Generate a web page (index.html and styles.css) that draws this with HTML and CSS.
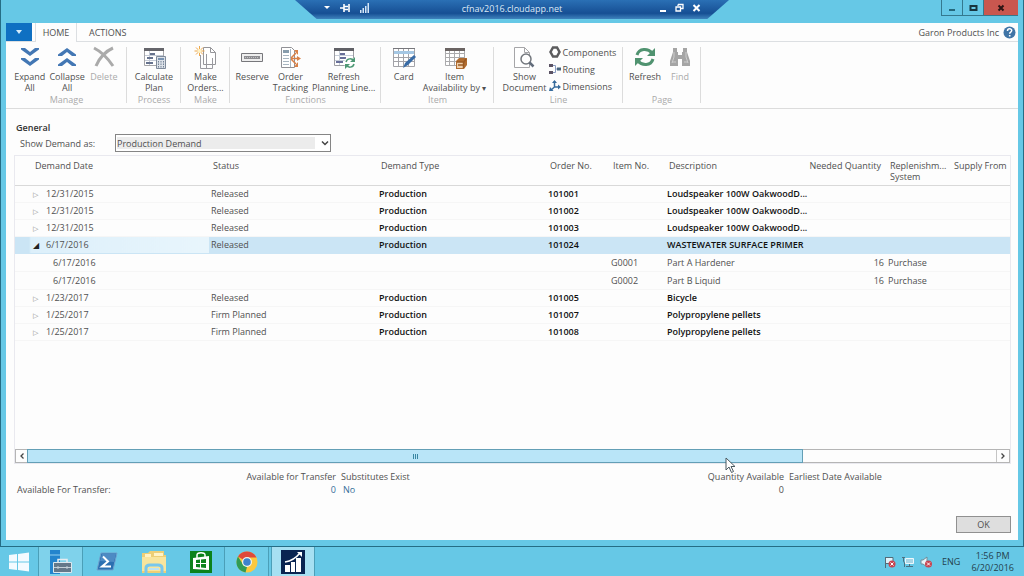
FILE: index.html
```
<!DOCTYPE html>
<html lang="en">
<head>
    <meta charset="UTF-8">
    <meta name="viewport" content="width=device-width, initial-scale=1.0">
    <title>Order Planning</title>
    <link rel="stylesheet" href="styles.css">
</head>
<body>
    <!-- Remote connection bar -->
    <div class="remote-bar">
        <div class="remote-tools">
            <svg width="8" height="10" viewBox="0 0 8 10"><path d="M1 3h6L4 6z" fill="#fff"/></svg>
            <svg width="12" height="10" viewBox="0 0 12 10"><path d="M1 5h4M5 1v8M5 3.5h4M5 6.5h4M10 1v8" stroke="#fff" stroke-width="1.6" fill="none"/></svg>
            <svg width="10" height="10" viewBox="0 0 10 10"><path d="M1 7h1.5v3H1zM3.5 5H5v5H3.5zM6 3h1.5v7H6zM8.5 0H10v10H8.5z" fill="#d5e6f7"/></svg>
        </div>
        <span class="remote-host">cfnav2016.cloudapp.net</span>
        <div class="remote-window">
            <svg width="8" height="10" viewBox="0 0 8 10"><path d="M1 7h6v2H1z" fill="#fff"/></svg>
            <svg width="9" height="10" viewBox="0 0 9 10"><path d="M3 1.5h5v4H6M3 1.5V3" stroke="#fff" stroke-width="1.3" fill="none"/><path d="M1 4h4.5v4H1z" stroke="#fff" stroke-width="1.3" fill="none"/></svg>
            <svg width="9" height="10" viewBox="0 0 9 10"><path d="M1.5 2l6 6M7.5 2l-6 6" stroke="#fff" stroke-width="2"/></svg>
        </div>
    </div>

    <main class="window">
        <header class="titlebar">
            <button class="win-btn" aria-label="Minimize"><svg width="8" height="8" viewBox="0 0 8 8"><path d="M1 5h6v2H1z" fill="#24687c"/></svg></button>
            <button class="win-btn" aria-label="Maximize"><svg width="9" height="8" viewBox="0 0 9 8"><path d="M1.5 2h6v4h-6z" fill="none" stroke="#17343e" stroke-width="2"/></svg></button>
            <button class="win-btn close" aria-label="Close"><svg width="8" height="8" viewBox="0 0 8 8"><path d="M1.5 1.5l5 5M6.5 1.5l-5 5" stroke="#2c1414" stroke-width="2"/></svg></button>
        </header>

        <div class="client">
            <nav class="tabs">
                <button class="app-menu" aria-label="Application menu"><svg width="8" height="6" viewBox="0 0 8 6"><path d="M1 1h6L4 5z" fill="#d6ecfb"/></svg></button>
                <button class="tab active">HOME</button>
                <button class="tab">ACTIONS</button>
                <span class="company">Garon Products Inc</span>
                <svg class="help" width="13" height="13" viewBox="0 0 13 13"><circle cx="6.5" cy="6.5" r="6" fill="#3f74a6"/><path d="M4.5 5c0-3 4.2-2.7 4.2-.4 0 1.6-2 1.4-2 3.2" stroke="#fff" stroke-width="1.5" fill="none"/><path d="M5.900 9h1.600v1.500H5.900z" fill="#fff"/></svg>
            </nav>

            <!-- Ribbon -->
            <div class="ribbon">
                <section class="group manage">
                    <div class="tools">
                        <button class="tool">
                            <svg width="24" height="24" viewBox="0 0 24 24"><path d="M3 2h4l5 4 5-4h4v1.5L12 10 3 3.5zM3 12h4l5 4 5-4h4v1.5L12 20l-9-6.5z" fill="#4377b4"/></svg>
                            Expand<br>All
                        </button>
                        <button class="tool">
                            <svg width="24" height="24" viewBox="0 0 24 24"><path d="M12 2l9 6.500V10h-4l-5-4-5 4H3V8.500zM12 12l9 6.500V20h-4l-5-4-5 4H3v-1.500z" fill="#4377b4"/></svg>
                            Collapse<br>All
                        </button>
                        <button class="tool" disabled>
                            <svg width="24" height="24" viewBox="0 0 24 24"><path d="M2 2c8 4 13 9 19 18M21 2C14 5 7 12 4 20" stroke="#aaa" stroke-width="3" fill="none"/></svg>
                            Delete
                        </button>
                    </div>
                    <h2>Manage</h2>
                </section>
                <section class="group process">
                    <div class="tools">
                        <button class="tool">
                            <svg width="24" height="24" viewBox="0 0 24 24"><path d="M2.500 2.500h19v17h-19z" fill="#fff" stroke="#a5a5a8"/><path d="M2 2h20v3H2z" fill="#65656b"/><path d="M3 9.500h18M3 14.500h18M7.500 5v14" stroke="#c5cbd6"/><path d="M8 7h5v2H8zM5 11h6v2H5zM4 16h7v2H4z" fill="#67738e"/><path d="M14.500 10.500h9v12h-9z" fill="#dce1e8" stroke="#7f8b9b"/><path d="M16 12h6v2h-6z" fill="#7893b2"/><path d="M16.500 15v7M19 15v7M21.500 15v7" stroke="#718194" stroke-dasharray="1.5 1"/></svg>
                            Calculate<br>Plan
                        </button>
                    </div>
                    <h2>Process</h2>
                </section>
                <section class="group make">
                    <div class="tools">
                        <button class="tool">
                            <svg width="24" height="24" viewBox="0 0 24 24"><path d="M9.500 1.500h7l5 5v12h-12z" fill="#fff" stroke="#96969a"/><path d="M16.500 1.500v5h5" fill="none" stroke="#96969a"/><path d="M6.500 9v13.500h12V12M12.500 8v14" fill="none" stroke="#9a9aa0"/><path d="M5.500 0v10M.5 5h10M2 1.500l7 7M9 1.500l-7 7" stroke="#eea74b"/><circle cx="5.500" cy="5" r="2" fill="#fff3c5"/></svg>
                            Make<br>Orders...
                        </button>
                    </div>
                    <h2>Make</h2>
                </section>
                <section class="group functions">
                    <div class="tools">
                        <button class="tool">
                            <svg width="24" height="24" viewBox="0 0 24 24"><path d="M1.500 7.500h21v8h-21z" fill="#eee" stroke="#77777b"/><path d="M4 10h16v3H4z" fill="#8d8d91"/><path d="M5 11.500h14" stroke="#c2c2c4" stroke-dasharray="1 1"/></svg>
                            Reserve
                        </button>
                        <button class="tool">
                            <svg width="24" height="24" viewBox="0 0 24 24"><path d="M3.500 1.500h10l3 3v17h-13z" fill="#fff" stroke="#919196"/><path d="M5 4h6v3H5z" fill="#879cac"/><path d="M5 9.500h6M5 12.500h6M5 15.500h6M5 18.500h6M12.500 3v18" stroke="#a8b6c1"/><path d="M13 12l5-5M13 12.500h7M13 13l5 5" stroke="#d98046" stroke-width="1.5"/><path d="M16 4h4v5zM19 10l4 2.500-4 2.500zM16 21h4v-5z" fill="#d98046"/></svg>
                            Order<br>Tracking
                        </button>
                        <button class="tool">
                            <svg width="24" height="24" viewBox="0 0 24 24"><path d="M2.500 2.500h19v17h-19z" fill="#fff" stroke="#9d9da2"/><path d="M2 2h20v3H2z" fill="#606066"/><path d="M3 9.500h18M3 14.500h18M7.500 5v14" stroke="#c7ced9"/><path d="M8 7h5v2H8zM8 11h6v2H8zM4 15h7v2H4z" fill="#686f99"/><circle cx="18" cy="17" r="6" fill="#fff"/><path d="M14 16c1-4 6-4 8-1M22 18c-1 4-6 4-8 1" stroke="#4e9875" stroke-width="1.5" fill="none"/><path d="M23 11v5h-5zM13 23v-5h5z" fill="#4e9875"/></svg>
                            Refresh<br>Planning Line...
                        </button>
                    </div>
                    <h2>Functions</h2>
                </section>
                <section class="group item">
                    <div class="tools">
                        <button class="tool">
                            <svg width="24" height="24" viewBox="0 0 24 24"><path d="M1.500 2.500h21v18h-21zM1 11.500h21M1 15.500h21M6.500 2v18M11.500 2v18M16.500 2v18" fill="#fff" stroke="#a3a3a8"/><path d="M2 6.500h20" stroke="#a5c7e3" stroke-width="3"/><path d="M1 2.500h22" stroke="#77777c"/><path d="M11 22l2-5 9-8 2 2-8 8z" fill="#386ba5"/></svg>
                            Card
                        </button>
                        <button class="tool">
                            <svg width="24" height="24" viewBox="0 0 24 24"><path d="M2.500 2.500h19v17h-19zM2 7.500h20M2 11.500h19M2 15.500h19M6.500 3v16M11.500 3v16M16.500 3v16" fill="#fff" stroke="#ababad"/><path d="M2 2h20v3H2z" fill="#6b6463"/><path d="M13 15l3-3h8v7l-3 4h-8z" fill="#b06c30"/><path d="M14 16h6v6h-6z" fill="#f0d0ac"/><path d="M14 16h7l2-3M20.500 16v6M15 19h5" stroke="#995922" stroke-width="1.5" fill="none"/></svg>
                            Item<br>Availability by <span class="caret">▾</span>
                        </button>
                    </div>
                    <h2>Item</h2>
                </section>
                <section class="group line">
                    <div class="tools">
                        <button class="tool">
                            <svg width="24" height="24" viewBox="0 0 24 24"><path d="M1.500 1.500h10l5 5v15h-15z" fill="#fff" stroke="#a6a6a9"/><path d="M11.500 1.500v5h5" fill="none" stroke="#a6a6a9"/><circle cx="13" cy="13" r="5" fill="#fff" stroke="#73777d" stroke-width="1.5"/><path d="M16.500 16.500l4 4" stroke="#626c7b" stroke-width="2.5"/></svg>
                            Show<br>Document
                        </button>
                        <div class="links">
                            <button class="link-tool"><svg width="12" height="12" viewBox="0 0 12 12"><path d="M4 1.500h4L10.500 6 8 10.500H4L1.500 6z" fill="#fff" stroke="#5c5c5e" stroke-width="2.5"/></svg>Components</button>
                            <button class="link-tool"><svg width="12" height="12" viewBox="0 0 12 12"><path d="M3 2.500h3.500v7H3M6.500 6H9" fill="none" stroke="#889bc0"/><path d="M0 1h4v3H0zM0 8h4v3H0z" fill="#5b5364"/><path d="M8 4.500h4v3H8z" fill="#47657e"/></svg>Routing</button>
                            <button class="link-tool"><svg width="12" height="12" viewBox="0 0 12 12"><path d="M5.500 1v6H11M5.500 7L2 10" fill="none" stroke="#376b9c" stroke-width="1.5"/><path d="M3 3l2.500-3L8 3zM9 4.500L12 7 9 9.500zM1 7l3.500 4H0z" fill="#376b9c"/></svg>Dimensions</button>
                        </div>
                    </div>
                    <h2>Line</h2>
                </section>
                <section class="group page">
                    <div class="tools">
                        <button class="tool">
                            <svg width="24" height="24" viewBox="0 0 24 24"><path d="M4 9c2-7 11-7 15-2M20 13c-2 7-11 7-15 2" stroke="#509370" stroke-width="3" fill="none"/><path d="M22 2v8h-8zM2 20v-8h8z" fill="#509370"/></svg>
                            Refresh
                        </button>
                        <button class="tool" disabled>
                            <svg width="24" height="24" viewBox="0 0 24 24"><path d="M5 2h4v4h1v3h4V6h1V2h4v4l3 9v5h-8v-7h-4v7H2v-5l3-9z" fill="#a5a5a5"/><path d="M6 6v5l-2 6M18 6v5l2 6M4 16h4M16 16h4" stroke="#ccc" fill="none"/></svg>
                            Find
                        </button>
                    </div>
                    <h2>Page</h2>
                </section>
            </div>

            <section class="general">
                <h1>General</h1>
                <div class="field">
                    <label for="demand">Show Demand as:</label>
                    <div class="select-wrap">
                        <select id="demand"><option>Production Demand</option></select>
                        <svg class="chevron" width="8" height="8" viewBox="0 0 8 8"><path d="M1 2.500l3 3 3-3" fill="none" stroke="#444" stroke-width="1.5"/></svg>
                    </div>
                </div>
            </section>

            <!-- Planning lines -->
            <div class="grid">
                <table class="lines">
                    <colgroup>
                        <col class="c-date"><col class="c-status"><col><col class="c-order"><col class="c-item"><col class="c-desc"><col class="c-qty"><col class="c-system"><col class="c-supply">
                    </colgroup>
                    <thead>
                        <tr><th class="date">Demand Date</th><th>Status</th><th>Demand Type</th><th>Order No.</th><th>Item No.</th><th>Description</th><th class="num">Needed Quantity</th><th>Replenishm...<br>System</th><th>Supply From</th></tr>
                    </thead>
                    <tbody>
                        <tr class="parent"><td class="date">12/31/2015</td><td>Released</td><td>Production</td><td>101001</td><td></td><td>Loudspeaker 100W OakwoodD...</td><td></td><td></td><td></td></tr>
                        <tr class="parent"><td class="date">12/31/2015</td><td>Released</td><td>Production</td><td>101002</td><td></td><td>Loudspeaker 100W OakwoodD...</td><td></td><td></td><td></td></tr>
                        <tr class="parent"><td class="date">12/31/2015</td><td>Released</td><td>Production</td><td>101003</td><td></td><td>Loudspeaker 100W OakwoodD...</td><td></td><td></td><td></td></tr>
                        <tr class="parent selected"><td class="date">6/17/2016</td><td>Released</td><td>Production</td><td>101024</td><td></td><td>WASTEWATER SURFACE PRIMER</td><td></td><td></td><td></td></tr>
                        <tr class="child"><td class="date">6/17/2016</td><td></td><td></td><td></td><td>G0001</td><td>Part A Hardener</td><td class="num">16</td><td>Purchase</td><td></td></tr>
                        <tr class="child"><td class="date">6/17/2016</td><td></td><td></td><td></td><td>G0002</td><td>Part B Liquid</td><td class="num">16</td><td>Purchase</td><td></td></tr>
                        <tr class="parent"><td class="date">1/23/2017</td><td>Released</td><td>Production</td><td>101005</td><td></td><td>Bicycle</td><td></td><td></td><td></td></tr>
                        <tr class="parent"><td class="date">1/25/2017</td><td>Firm Planned</td><td>Production</td><td>101007</td><td></td><td>Polypropylene pellets</td><td></td><td></td><td></td></tr>
                        <tr class="parent"><td class="date">1/25/2017</td><td>Firm Planned</td><td>Production</td><td>101008</td><td></td><td>Polypropylene pellets</td><td></td><td></td><td></td></tr>
                    </tbody>
                </table>
                <div class="scrollbar">
                    <button aria-label="Scroll left"><svg width="6" height="8" viewBox="0 0 6 8"><path d="M4.500 1.500L2 4l2.500 2.500" fill="none" stroke="#444" stroke-width="1.3"/></svg></button>
                    <div class="track"><div class="thumb"><i></i><i></i><i></i></div></div>
                    <button aria-label="Scroll right"><svg width="6" height="8" viewBox="0 0 6 8"><path d="M1.500 1.500L4 4 1.500 6.500" fill="none" stroke="#444" stroke-width="1.3"/></svg></button>
                </div>
            </div>

            <table class="totals">
                <thead>
                    <tr><th class="t-label"></th><th class="t-transfer">Available for Transfer</th><th>Substitutes Exist</th><th class="t-qty">Quantity Available</th><th class="t-date">Earliest Date Available</th></tr>
                </thead>
                <tbody>
                    <tr><td class="t-label">Available For Transfer:</td><td class="t-transfer"><a href="#">0</a></td><td class="t-exist"><a href="#">No</a></td><td class="t-qty">0</td><td></td></tr>
                </tbody>
            </table>

            <footer class="actions"><button class="ok">OK</button></footer>
        </div>
    </main>

    <footer class="taskbar">
        <button class="task start" aria-label="Start"><svg width="22" height="20" viewBox="0 0 22 20"><path d="M1 3l8-1v7.500H1zM10 2l11-1.500v9H10zM1 10.500h8V18l-8-1zM10 10.500h11v9L10 18z" fill="#f4fbff"/></svg></button>
        <button class="task open" aria-label="Server Manager"><svg width="24" height="24" viewBox="0 0 24 24"><path d="M1 0h10v24H1z" fill="#2384cd"/><path d="M1 5h10" stroke="#93d0f0"/><path d="M9 12.500v-3h9v3" fill="none" stroke="#e7edf1" stroke-width="1.5"/><path d="M4.500 12.500h18v10h-18z" fill="#64788a" stroke="#dce8ef"/><path d="M5 17.500h17M9 16v3M18 16v3" stroke="#c4d0d8"/></svg></button>
        <button class="task" aria-label="PowerShell"><svg width="22" height="20" viewBox="0 0 22 20"><path d="M5 1h16l-4 17H1z" fill="#2c70b1" stroke="#6fa3cf"/><path d="M6 2h14l-2 8-14-1z" fill="#4d8bc4"/><path d="M7 4.500l5 5-6 5h9" fill="none" stroke="#fff" stroke-width="2"/></svg></button>
        <button class="task" aria-label="File Explorer"><svg width="26" height="24" viewBox="0 0 26 24"><path d="M1 3h6l2-2h14v4h2v18H1z" fill="#edcf76"/><path d="M4 4h6v3H4zM13 3h9v3h-9z" fill="#fff3c5"/><path d="M1 7h24v14H1z" fill="#f8e59d"/><path d="M5 23v-5c0-2 2-3 4-3h8c2 0 4 1 4 3v5" fill="none" stroke="#79c7ec" stroke-width="3"/><path d="M8 19h10" stroke="#bce3f3" stroke-width="2"/></svg></button>
        <button class="task" aria-label="Store"><svg width="24" height="24" viewBox="0 0 24 24"><path d="M1 1h22v22H1z" fill="#0b821c"/><path d="M4 8l16-2v14l-16-1z" fill="#fff"/><path d="M8 8V5c0-3 8-3 8 0v2" fill="none" stroke="#fff" stroke-width="1.5"/><path d="M7 10l4-.5V13H7zM12 9.500l5-.5v4h-5zM7 14h4v3.500L7 17zM12 14h5v4l-5-.5z" fill="#0b821c"/></svg></button>
        <button class="task ready" aria-label="Chrome"><svg width="22" height="22" viewBox="0 0 22 22"><circle cx="11" cy="11" r="10.5" fill="#fbc83e"/><path d="M11 11L2 5.500C6-1.500 17-1 20.500 6.500H11z" fill="#df493b"/><path d="M2 5.500L7 13.500 11 16l-1.500 5.500C1 20-1.500 12 2 5.500z" fill="#319b54"/><circle cx="11" cy="11" r="5" fill="#f2f6ef"/><circle cx="11" cy="11" r="3.8" fill="#3d82cd"/></svg></button>
        <button class="task current" aria-label="Dynamics NAV"><svg width="24" height="24" viewBox="0 0 24 24"><path d="M0 0h24v24H0z" fill="#092451"/><path d="M4 15h5v7H4zM10 12h4v10h-4zM15 8h5v14h-5z" fill="#fff"/><path d="M4 12c7-1 11-4 15-9" fill="none" stroke="#fff" stroke-width="1.5"/><path d="M16 2h5v5z" fill="#fff"/></svg></button>
        <div class="tray">
            <svg width="12" height="12" viewBox="0 0 12 12"><path d="M1.500 1v11M2 1.500h7v6H2" fill="#dff3fb" stroke="#536c79"/><circle cx="8" cy="8" r="3.5" fill="#c84451"/><path d="M6.500 6.500l3 3M9.500 6.500l-3 3" stroke="#fff"/></svg>
            <svg width="12" height="12" viewBox="0 0 12 12"><path d="M3.500 2.500h8v5h-8z" fill="#a9d6e6" stroke="#edf8fc"/><path d="M1.500 1v4c0 1 1 1 1 2v4M0 1.500h3M4 10.500h7M7.500 8v2" stroke="#4d7081" fill="none"/></svg>
            <svg width="12" height="12" viewBox="0 0 12 12"><path d="M1 4h2l4-3v10L3 8H1z" fill="#e9f5fa" stroke="#718c99"/><circle cx="8.500" cy="8" r="3.5" fill="#c84451"/><path d="M7 6.500l3 3M10 6.500l-3 3" stroke="#fff"/></svg>
            <span class="lang">ENG</span>
            <span class="clock">1:56 PM<br>6/20/2016</span>
        </div>
    </footer>

    <svg class="pointer" width="11" height="17" viewBox="0 0 11 17"><path d="M1 1v12l3-3 2.500 5.500 2-1L6 9.500h4z" fill="#fff" stroke="#4b5960"/></svg>
</body>
</html>
```
FILE: styles.css
```
* {
    margin: 0;
    padding: 0;
    box-sizing: border-box;
}

body {
    height: 100vh;
    display: flex;
    flex-direction: column;
    position: relative;
    overflow: hidden;
    background-color: #66c8e6;
    color: #505050;
    font-family: 'Open Sans', 'Noto Sans', sans-serif;
    font-size: 9px;
    line-height: 11px;
}

button, select {
    font: inherit;
    color: inherit;
    background: none;
    border: none;
}

svg {
    display: block;
    flex: none;
}

/* Remote connection bar */
.remote-bar {
    position: absolute;
    top: 0;
    left: 50%;
    width: 434px;
    height: 19px;
    transform: translateX(-50%);
    display: flex;
    align-items: center;
    padding: 0 28px 3px;
    background: linear-gradient(#2a70b5, #164f94 70%, #3f83bd);
    clip-path: polygon(0 0, 100% 0, 95% 100%, 5% 100%);
    color: #dce9f6;
}

.remote-tools, .remote-window {
    display: flex;
    gap: 8px;
    width: 64px;
}

.remote-host {
    flex: 1;
    text-align: center;
}

.remote-window {
    justify-content: flex-end;
}

/* Window */
.window {
    flex: 1;
    min-height: 0;
    display: flex;
    flex-direction: column;
    padding: 0 5px 6px;
    border: 1px solid #256d85;
    border-width: 0 1px 1px;
}

.titlebar {
    height: 23px;
    display: flex;
    justify-content: flex-end;
    align-items: flex-start;
}

.win-btn {
    width: 21px;
    height: 16px;
    display: flex;
    justify-content: center;
    align-items: center;
    border: 1px solid #34798f;
    border-width: 0 0 1px 1px;
}

.close {
    width: 35px;
    background-color: #c9574f;
}

.client {
    flex: 1;
    min-height: 0;
    display: flex;
    flex-direction: column;
    background-color: #fdfdfd;
}

.tabs {
    height: 19px;
    display: flex;
    align-items: stretch;
    border-bottom: 1px solid #dcdfe2;
}

.app-menu {
    width: 26px;
    display: flex;
    justify-content: center;
    align-items: center;
    background-color: #0f70c2;
}

.tab {
    padding: 0 12px;
}

.tab.active {
    width: 42px;
    padding: 0;
    margin: 0 0 -1px 3px;
    background-color: #fdfdfd;
    border: 1px solid #dcdfe2;
    border-width: 0 1px;
}

.company {
    margin-left: auto;
    align-self: center;
}

.help {
    margin: 3px 2px 0 4px;
}

/* Ribbon */
.ribbon {
    display: flex;
    height: 67px;
    padding: 4px 0 2px;
    border-bottom: 1px solid #dcdcdc;
}

.group {
    display: flex;
    flex-direction: column;
    background: linear-gradient(#dcdcdc, #dcdcdc) right 1px / 1px 56px no-repeat;
}

.manage { width: 121px; }
.process { width: 54px; }
.make { width: 49px; }
.functions { width: 151px; }
.item { width: 113px; }
.line { width: 129px; }
.page { width: 78px; }

.tools {
    flex: 1;
    display: flex;
    justify-content: center;
}

.tool {
    display: flow-root;
    min-width: 34px;
    padding: 0 2px;
    align-self: flex-start;
    white-space: nowrap;
    text-align: center;
}

.tool svg {
    margin: 0 auto 1px;
}

.tool:disabled {
    color: #aaa;
}

.caret {
    font-size: 8px;
}

.group h2 {
    font-size: 9px;
    font-weight: normal;
    line-height: 12px;
    text-align: center;
    color: #aaa;
}

.links {
    display: flex;
    flex-direction: column;
    gap: 5px;
    margin-left: 1px;
}

.link-tool {
    display: flex;
    align-items: center;
    gap: 1px;
    height: 12px;
}

/* General */
.general {
    padding: 13px 10px 3px;
}

.general h1 {
    font-size: 9px;
    font-weight: 600;
    line-height: 12px;
    color: #333;
}

.field {
    display: flex;
    align-items: center;
}

.field label {
    width: 99px;
    padding-left: 4px;
}

.select-wrap {
    position: relative;
    width: 216px;
}

.select-wrap select {
    appearance: none;
    display: block;
    width: 100%;
    height: 18px;
    padding: 0 1px;
    border: 1px solid #858585;
    background: linear-gradient(#ececec, #ececec) 1px 2px / 198px 12px no-repeat #fff;
}

.chevron {
    position: absolute;
    right: 2px;
    top: 5px;
}

/* Planning lines */
.grid {
    flex: 1;
    display: flex;
    flex-direction: column;
    justify-content: space-between;
    margin: 0 7px 0 8px;
    border: 1px solid #e9e9ef;
}

.lines {
    width: 100%;
    table-layout: fixed;
    border-collapse: collapse;
}

.c-date { width: 194px; }
.c-status { width: 168px; }
.c-order { width: 63px; }
.c-item { width: 56px; }
.c-desc { width: 141px; }
.c-qty { width: 80px; }
.c-system { width: 64px; }
.c-supply { width: 60px; }

.lines th {
    height: 29px;
    padding: 4px 0 0 4px;
    font-weight: normal;
    text-align: left;
    vertical-align: top;
    white-space: nowrap;
    border-bottom: 1px solid #d9d9d9;
}

.lines td {
    height: 17px;
    padding: 0 0 0 2px;
    white-space: nowrap;
    border-bottom: 1px solid #f6f6f6;
}

.lines .child td {
    height: 18px;
}

.lines th.date {
    padding-left: 20px;
}

.lines td.date::before {
    content: '▷';
    display: inline-block;
    width: 13px;
    font-family: 'DejaVu Sans', sans-serif;
    font-size: 7px;
    line-height: 7px;
    color: #888;
}

.parent .date {
    padding-left: 18px;
}

.child td.date {
    padding-left: 38px;
}

.child td.date::before {
    display: none;
}

.lines .selected td.date::before {
    content: '◢';
    font-size: 8px;
    color: #222;
}

.parent td:nth-child(n+3) {
    font-weight: 600;
    color: #111;
}

.lines .selected td {
    background-color: #cbe5f5;
    border-color: #cbe5f5;
}

.lines .selected td.date {
    background: linear-gradient(90deg, #cbe5f5 14px, #dceffa 16px, #e8f5fc);
}

.lines th.num, .lines td.num {
    text-align: right;
}

.lines th.num {
    padding: 4px 5px 0 0;
}

.lines td.num {
    padding-right: 2px;
}

.scrollbar {
    height: 14px;
    display: flex;
    border: 1px solid #b5b5b5;
}

.scrollbar button {
    width: 12px;
    display: flex;
    justify-content: center;
    align-items: center;
}

.track {
    flex: 1;
    border-right: 1px solid #c5c5c5;
}

.thumb {
    width: 80%;
    height: 12px;
    display: flex;
    justify-content: center;
    align-items: center;
    gap: 1px;
    background-color: #b9e5f8;
    outline: 1px solid #639fb6;
}

.thumb i {
    width: 1px;
    height: 5px;
    background-color: #3987a2;
}

/* Totals */
.totals {
    margin: 6px 9px 0;
    border-collapse: collapse;
    table-layout: fixed;
}

.totals th, .totals td {
    height: 13px;
    padding: 0 0 0 5px;
    font-weight: normal;
    text-align: left;
    white-space: nowrap;
}

.totals .t-label {
    width: 200px;
    padding-left: 2px;
}

.totals .t-transfer {
    width: 121px;
    text-align: right;
}

.totals .t-qty {
    text-align: right;
}

.totals .t-date {
    width: 225px;
}

.totals .t-exist {
    padding-left: 7px;
}

.totals a {
    color: #356f99;
    text-decoration: none;
}

.actions {
    padding: 20px 7px 7px;
    display: flex;
    justify-content: flex-end;
}

.ok {
    width: 55px;
    height: 17px;
    border: 1px solid #909090;
    background-color: #dedede;
}

/* Taskbar */
.taskbar {
    height: 29px;
    display: flex;
    align-items: stretch;
    color: #24414c;
}

.task {
    width: 47px;
    display: flex;
    justify-content: center;
    align-items: center;
}

.start {
    width: 38px;
}

.open, .ready {
    width: 45px;
    border: 1px solid #4b9fb8;
    border-width: 0 1px;
    background-color: #7fd2eb;
}

.ready {
    background-color: #70cde9;
}

.current {
    margin-left: 2px;
    width: 44px;
    border: 1px solid #4b9fb8;
    border-width: 0 1px;
    background-color: #a6e0f2;
}

.tray {
    margin-left: auto;
    display: flex;
    align-items: center;
    gap: 6px;
    padding-right: 10px;
}

.lang {
    margin-left: 4px;
}

.clock {
    margin-left: 5px;
    line-height: 12px;
    text-align: center;
}

.pointer {
    position: absolute;
    left: 725px;
    top: 457px;
}
```
